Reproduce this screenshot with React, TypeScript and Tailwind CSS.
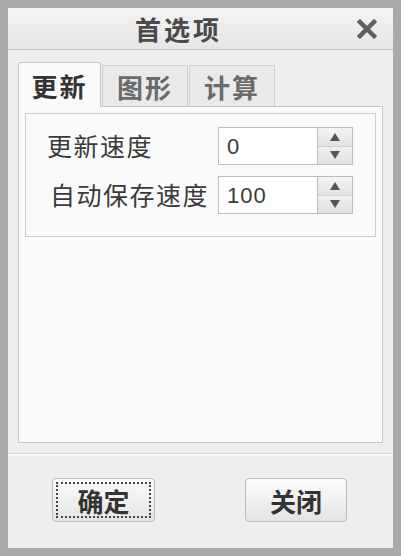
import { useState } from 'react'

const cjk = '[font-family:"Noto_Sans_CJK_SC","Liberation_Sans",sans-serif]'

function Spinner({ value }: { value: string }) {
  return (
    <div className="flex h-[38px]">
      <div className="w-[100px] h-full bg-white border border-[#bdbdbd] flex items-center pl-[8px] text-[22px] text-[#3a3a3a] tracking-[1px] [font-family:'Liberation_Sans',sans-serif]">
        {value}
      </div>
      <div className="w-[35px] h-full border border-l-0 border-[#bdbdbd] flex flex-col">
        <div className="flex-1 flex items-center justify-center bg-gradient-to-b from-[#f4f4f4] to-[#e2e2e2] border-b border-[#d0d0d0]">
          <span className="w-0 h-0 border-l-[5px] border-r-[5px] border-b-[8px] border-l-transparent border-r-transparent border-b-[#555]" />
        </div>
        <div className="flex-1 flex items-center justify-center bg-gradient-to-b from-[#f0f0f0] to-[#e0e0e0]">
          <span className="w-0 h-0 border-l-[5px] border-r-[5px] border-t-[8px] border-l-transparent border-r-transparent border-t-[#555]" />
        </div>
      </div>
    </div>
  )
}

export default function App() {
  const [tab, setTab] = useState(0)
  const tabs = ['更新', '图形', '计算']

  return (
    <div className={`w-[401px] h-[556px] bg-[#a9a9a9] p-[8px] flex flex-col ${cjk}`}>
      <div className="h-[42px] shrink-0 bg-gradient-to-b from-[#f3f3f3] to-[#e6e6e6] border-b border-[#c4c4c4] flex items-center relative">
        <div className="flex-1 flex justify-center pr-[44px] text-[26px] font-bold text-[#4a4a4a] tracking-[3px]">
          首选项
        </div>
        <svg className="absolute right-[16px] top-[11px]" width="20" height="20" viewBox="0 0 20 20">
          <path d="M3 3 L17 17 M17 3 L3 17" stroke="#606060" strokeWidth="4.5" strokeLinecap="square" />
        </svg>
      </div>

      <div className="flex-1 bg-[#eeeeee] flex flex-col">
        <div className="px-[10px] pt-[12px]">
          <div className="flex h-[44px] items-end">
            {tabs.map((t, i) =>
              i === tab ? (
                <button
                  key={t}
                  onClick={() => setTab(i)}
                  className="w-[83px] h-[45px] -mb-px relative z-10 bg-[#fafafa] border border-b-0 border-[#c6c6c6] rounded-t-[3px] text-[26px] font-bold text-[#333] flex items-center justify-center tracking-[2px]"
                >
                  {t}
                </button>
              ) : (
                <button
                  key={t}
                  onClick={() => setTab(i)}
                  className="w-[86px] h-[41px] ml-[1px] bg-[#e9e9e9] border border-b-0 border-[#cfcfcf] text-[26px] font-bold text-[#6a6a6a] flex items-center justify-center tracking-[2px]"
                >
                  {t}
                </button>
              )
            )}
          </div>
          <div className="h-[337px] bg-[#fafafa] border border-[#c6c6c6] p-[6px]">
            {tab === 0 && (
              <div className="h-[124px] border border-[#cdcdcd] pt-[13px] flex flex-col gap-[11px]">
                <div className="flex items-center">
                  <div className="w-[192px] pl-[21px] text-[25px] text-[#3a3a3a] tracking-[1.5px]">更新速度</div>
                  <Spinner value="0" />
                </div>
                <div className="flex items-center">
                  <div className="w-[192px] pl-[24px] text-[25px] text-[#3a3a3a] tracking-[1.5px] whitespace-nowrap">自动保存速度</div>
                  <Spinner value="100" />
                </div>
              </div>
            )}
          </div>
        </div>

        <div className="mt-[10px] flex-1 border-t border-[#d2d2d2] shadow-[inset_0_2px_0_#fbfbfb] flex items-start pt-[24px]">
          <div className="ml-[44px] w-[103px] h-[44px] rounded-[4px] border border-[#b9b9b9] bg-gradient-to-b from-[#fbfbfb] to-[#e4e4e4] p-[3px]">
            <div className="w-full h-full border-2 border-dotted border-[#444] flex items-center justify-center text-[26px] font-bold text-[#333]">
              确定
            </div>
          </div>
          <div className="ml-[90px] w-[102px] h-[44px] rounded-[4px] border border-[#b9b9b9] bg-gradient-to-b from-[#fbfbfb] to-[#e4e4e4] flex items-center justify-center text-[26px] font-bold text-[#333]">
            关闭
          </div>
        </div>
      </div>
    </div>
  )
}
